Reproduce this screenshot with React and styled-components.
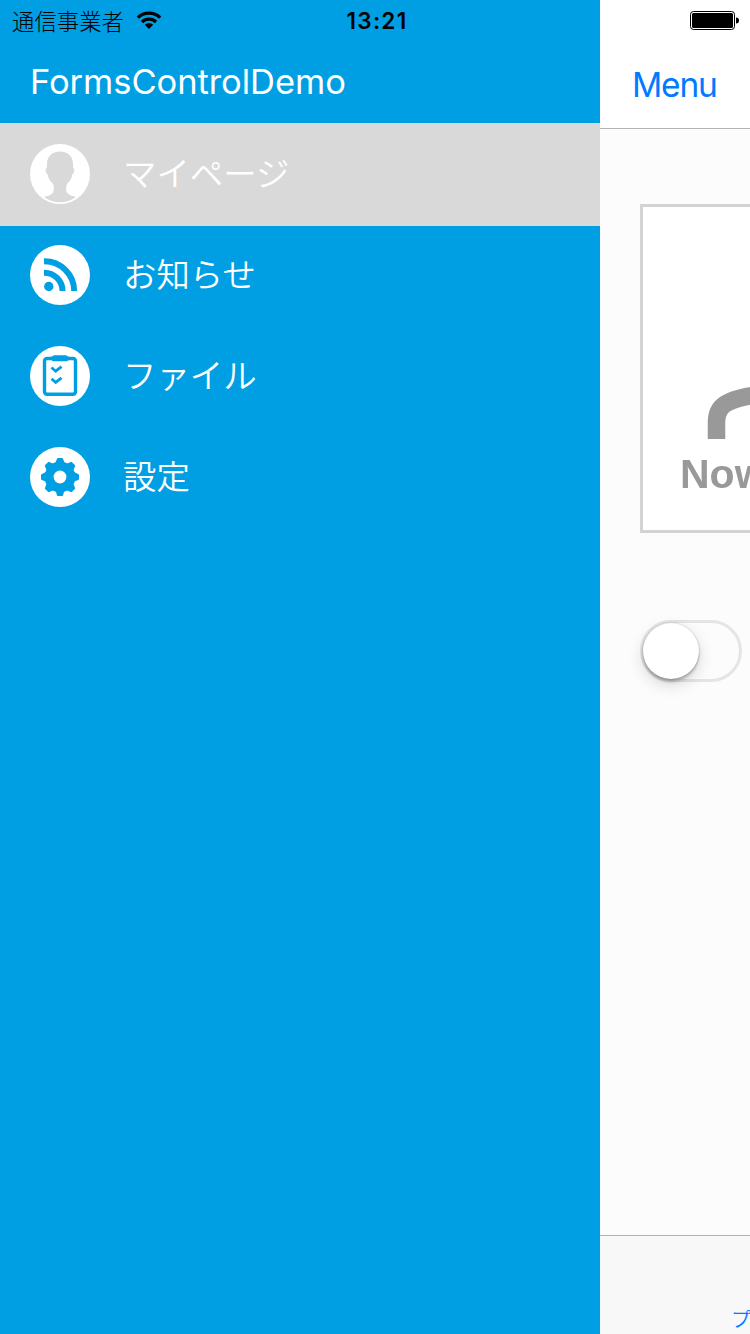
import React from "react";
import styled, { createGlobalStyle } from "styled-components";

const blue = "#009fe3";
const latin = `Inter, "Liberation Sans", "Noto Sans CJK JP", sans-serif`;
const japanese = `"Noto Sans CJK JP", sans-serif`;

const GlobalStyle = createGlobalStyle`
  * { box-sizing: border-box; }
  body { margin: 0; font-family: ${latin}; }
`;

const Screen = styled.div`
  position: relative;
  display: flex;
  width: 750px;
  height: 1334px;
  overflow: hidden;
`;

const StatusBar = styled.header`
  position: absolute;
  inset: 0 0 auto 0;
  z-index: 2;
  height: 40px;
  padding: 0 11px 0 12px;
  display: grid;
  grid-template-columns: 1fr auto 1fr;
  align-items: center;
  color: #000;
`;

const Carrier = styled.div`
  display: flex;
  align-items: center;
  gap: 12px;
  padding-bottom: 2px;
  font: 300 22.4px/36px ${japanese};
  svg { display: block; }
`;

const Clock = styled.time`
  font: 600 22.5px/40px ${latin};
  letter-spacing: 1.3px;
  padding-top: 1px;
  margin-left: 3px;
`;

const Battery = styled.svg`
  display: block;
  justify-self: end;
`;

const Drawer = styled.nav`
  flex: 0 0 600px;
  background: ${blue};
  padding-top: 40px;
`;

const DrawerTitle = styled.h1`
  margin: 0;
  height: 84px;
  padding-left: 30px;
  color: #fff;
  font: 400 34.5px/84px ${latin};
  letter-spacing: -0.05px;
`;

const MenuList = styled.ul`
  list-style: none;
  margin: 0;
  padding: 0;
`;

const MenuRow = styled.li`
  display: flex;
  align-items: center;
  gap: 33px;
  height: 101px;
  padding: 0 30px 2px;
  color: #fff;
  background: ${(p) => (p.$selected ? "#d9d9d9" : "transparent")};
  box-shadow: ${(p) => (p.$selected ? "0 0 0 1px #d9d9d9" : "none")};
  --glyph: ${(p) => (p.$selected ? "#d9d9d9" : blue)};
  svg { display: block; flex: none; }
`;

const MenuLabel = styled.span`
  font: 350 33.4px/50px ${japanese};
  padding-bottom: 4px;
`;

const Page = styled.main`
  flex: 0 0 150px;
  display: flex;
  flex-direction: column;
  overflow: hidden;
  background: #fcfcfc;
`;

const NavBar = styled.div`
  height: 129px;
  padding: 41px 0 0 32px;
  border-bottom: 1px solid #b2b2b2;
  background: #fff;
`;

const NavButton = styled.button`
  border: 0;
  padding: 0;
  background: none;
  color: #007aff;
  font: 400 33.5px/88px ${latin};
  letter-spacing: -1.2px;
`;

const Content = styled.div`
  flex: 1;
  padding: 75px 0 0 40px;
`;

const PictureFrame = styled.div`
  width: 329px;
  height: 329px;
  border: 3px solid #d3d3d3;
  background: #fff;
  padding: 178px 0 0 37px;
  svg { display: block; margin-left: 27px; filter: blur(0.6px); }
`;

const PictureText = styled.div`
  color: #999;
  font: 700 41px/50px "Liberation Sans", sans-serif;
  margin-top: 10px;
  white-space: nowrap;
  filter: blur(0.7px);
`;

const Switch = styled.div`
  width: 102px;
  height: 62px;
  margin-top: 87px;
  padding: 0;
  border: 3px solid #e5e5e5;
  border-radius: 31px;
`;

const Thumb = styled.div`
  width: 56px;
  height: 56px;
  border-radius: 50%;
  background: #fff;
  box-shadow: 0 6px 16px rgba(0, 0, 0, 0.15), 0 3px 3px rgba(0, 0, 0, 0.22), 0 0 2px rgba(0, 0, 0, 0.25);
`;

const TabBar = styled.div`
  height: 99px;
  border-top: 1px solid #b2b2b2;
  background: #f8f8f8;
  display: flex;
  align-items: flex-end;
  padding: 0 0 1px 131px;
`;

const TabLabel = styled.span`
  color: #007aff;
  font: 350 20px/28px ${japanese};
  white-space: nowrap;
`;

const Disc = ({ children }) => (
  <svg width="60" height="60" viewBox="0 0 60 60">
    <circle cx="30" cy="30" r="30" fill="#fff" />
    {children}
  </svg>
);

const PersonIcon = () => (
  <Disc>
    <path
      fill="var(--glyph)"
      d="M30 7.500C21.500 7.500 17 13 17 20L16.800 24C14.800 24.500 15.700 29.500 17.800 30.500C18.200 34 19.500 36.500 22 38.500C24.200 41.500 24.600 46 22.600 49C20.800 51.500 17.500 52 14 52.900C23.500 60 36.500 60 46 52.900C42.500 52 39.200 51.500 37.400 49C35.400 46 35.800 41.500 38 38.500C40.500 36.500 41.800 34 42.200 30.500C44.300 29.500 45.200 24.500 43.200 24L43 20C43 13 38.500 7.500 30 7.500Z"
    />
  </Disc>
);

const FeedIcon = () => (
  <Disc>
    <circle cx="18.800" cy="41.500" r="4.700" fill="var(--glyph)" />
    <g fill="none" stroke="var(--glyph)" strokeWidth="6">
      <path d="M14 27.700A18.300 18.300 0 0 1 32.500 46" />
      <path d="M14 16.200A29.800 29.800 0 0 1 44.200 46" />
    </g>
  </Disc>
);

const ClipboardIcon = () => (
  <Disc>
    <g fill="none" stroke="var(--glyph)">
      <rect x="14.500" y="12.500" width="31" height="35.800" rx="2.500" strokeWidth="3.400" />
      <path d="M21.500 21.500l4.200 3.700 5.800-4.500M21.500 32.700l4.200 3.700 5.800-4.500" strokeWidth="2.800" />
    </g>
    <path fill="var(--glyph)" d="M24 9.200h12q1 0 1 1h1.500v3q0 2-2 2h-13q-2 0-2-2v-3H23q0-1 1-1Z" />
  </Disc>
);

const GearIcon = () => (
  <Disc>
    <circle cx="30" cy="30" r="15.300" fill="var(--glyph)" />
    {[0, 45, 90, 135, 180, 225, 270, 315].map((angle) => (
      <path
        key={angle}
        fill="var(--glyph)"
        transform={`rotate(${angle} 30 30)`}
        d="M23 17.500Q26 16 26.700 12.500Q27 11 28 11H32Q33 11 33.300 12.500Q34 16 37 17.500L30 24Z"
      />
    ))}
    <circle cx="30" cy="30" r="6.400" fill="#fff" />
  </Disc>
);

const WifiIcon = () => (
  <svg width="26" height="20" viewBox="0 0 26 20">
    <g fill="none" stroke="#000" strokeWidth="3.200">
      <path d="M1.800 7.600A16 16 0 0 1 24.200 7.600" />
      <path d="M6 12A10 10 0 0 1 20 12" />
    </g>
    <path d="M8.800 14.800A6 6 0 0 1 17.200 14.800L13 19Z" />
  </svg>
);

const BatteryIcon = () => (
  <Battery width="49" height="20" viewBox="0 0 49 20">
    <rect x="0.500" y="0.500" width="44" height="18" rx="3" fill="#fff" stroke="#000" />
    <rect x="2" y="2" width="41" height="15" rx="1.500" />
    <path d="M46 6.500Q49 6.500 49 9.500T46 12.500Z" />
  </Battery>
);

const items = [
  { label: "マイページ", Icon: PersonIcon, selected: true },
  { label: "お知らせ", Icon: FeedIcon },
  { label: "ファイル", Icon: ClipboardIcon },
  { label: "設定", Icon: GearIcon },
];

export default function App() {
  return (
    <Screen>
      <GlobalStyle />
      <StatusBar>
        <Carrier>
          通信事業者
          <WifiIcon />
        </Carrier>
        <Clock>13:21</Clock>
        <BatteryIcon />
      </StatusBar>
      <Drawer>
        <DrawerTitle>FormsControlDemo</DrawerTitle>
        <MenuList>
          {items.map(({ label, Icon, selected }) => (
            <MenuRow key={label} $selected={selected}>
              <Icon />
              <MenuLabel>{label}</MenuLabel>
            </MenuRow>
          ))}
        </MenuList>
      </Drawer>
      <Page>
        <NavBar>
          <NavButton>Menu</NavButton>
        </NavBar>
        <Content>
          <PictureFrame>
            <svg width="90" height="54" viewBox="0 0 90 54">
              <path
                d="M9.500 54V36Q10 22 22 17Q32 12.500 46 10.500Q60 8.500 90 8.500"
                fill="none"
                stroke="#999"
                strokeWidth="17.500"
              />
            </svg>
            <PictureText>Now</PictureText>
          </PictureFrame>
          <Switch>
            <Thumb />
          </Switch>
        </Content>
        <TabBar>
          <TabLabel>プ</TabLabel>
        </TabBar>
      </Page>
    </Screen>
  );
}
